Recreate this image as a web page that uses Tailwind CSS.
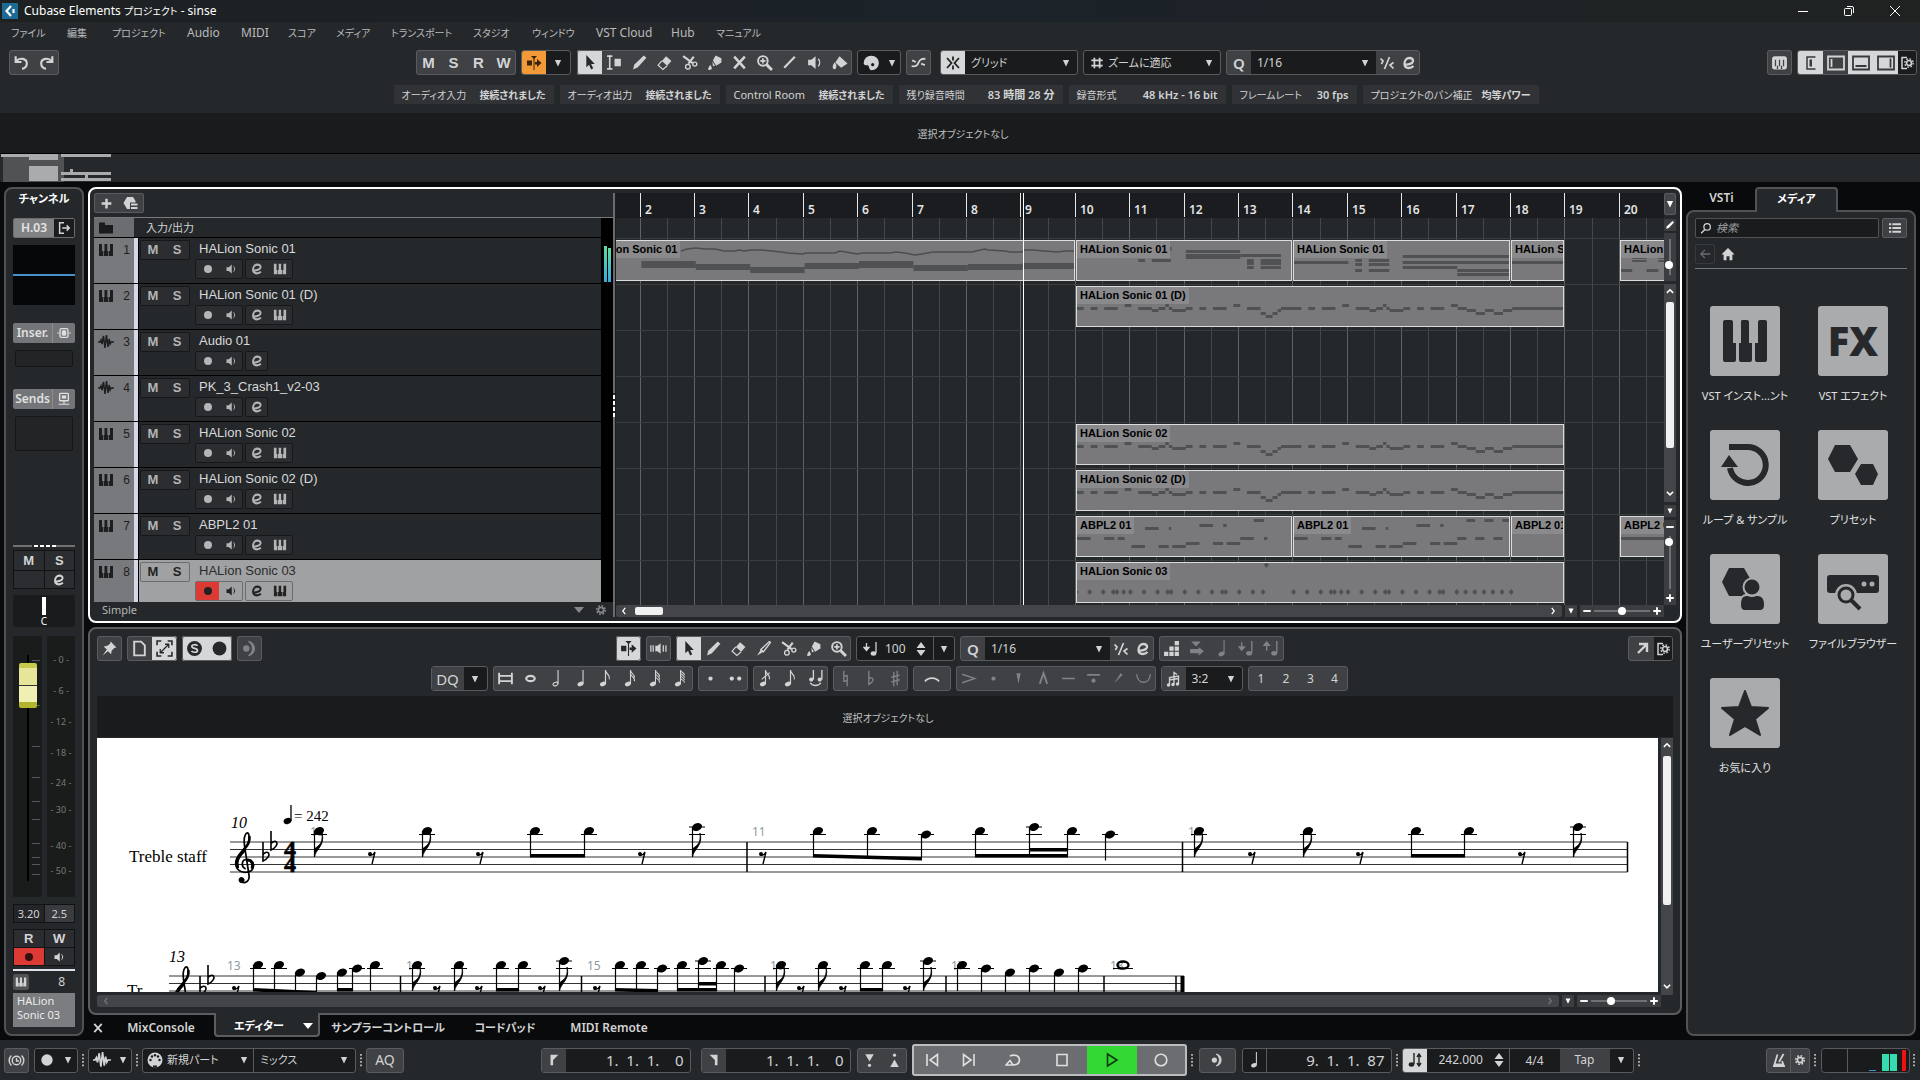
<!DOCTYPE html>
<html lang="ja">
<head>
  <meta charset="UTF-8" />
  <meta name="viewport" content="width=device-width, initial-scale=1.0"/>
  <title>Cubase Elements プロジェクト - sinse</title>
  <script src="https://cdn.jsdelivr.net/npm/@tailwindcss/browser@4"></script>
</head>
<body class="h-screen flex flex-col overflow-hidden bg-[#090a0b] text-[#d2d3d4] text-[12px] leading-4 font-['Noto_Sans','Noto_Sans_CJK_JP',sans-serif] [font-feature-settings:'palt']">

  <!-- icon sprite -->
  <svg class="hidden">
    <symbol id="tri" viewBox="0 0 16 16"><path d="M3 3h10l-5 10.500z" fill="currentColor"/></symbol>
    <symbol id="undo" viewBox="0 0 16 16"><path d="M2.500 2v5.500h5.500M3 7C6 3 13 4 13 9c0 3-2 4.500-4.500 5" fill="none" stroke="currentColor" stroke-width="2"/></symbol>
    <symbol id="redo" viewBox="0 0 16 16"><path d="M13.500 2v5.500H8M13 7C10 3 3 4 3 9c0 3 2 4.500 4.500 5" fill="none" stroke="currentColor" stroke-width="2"/></symbol>
    <symbol id="scroll" viewBox="0 0 16 16"><path d="M1 5.500h5v5H1zM9 7h2V4l4.500 4-4.500 4V9.500H9zM5 1h6L8 4z" fill="currentColor"/><path d="M8 2v13" stroke="currentColor"/></symbol>
    <symbol id="arrow" viewBox="0 0 16 16"><path d="M5 1v11.500l2.600-2.500 1.900 4.500 2-1-2-4.200H13z" fill="currentColor"/></symbol>
    <symbol id="range" viewBox="0 0 16 16"><path d="M1 2h5M1 14h5M3.500 2v12" stroke="currentColor" stroke-width="1.500"/><path d="M8 4.500h6v7H8z" fill="currentColor"/></symbol>
    <symbol id="pencil" viewBox="0 0 16 16"><path d="M12 1.500l2.500 2L6.500 12.500l-4.500 2 1-4.500z" fill="currentColor"/></symbol>
    <symbol id="eraser" viewBox="0 0 16 16"><path d="M9.500 2l5 4.500-4 4.500-5-4.500z" fill="currentColor"/><path d="M5.500 6.500l-3.500 4L6.500 14.500l4-3.500" fill="none" stroke="currentColor" stroke-width="1.200"/></symbol>
    <symbol id="cut" viewBox="0 0 16 16"><path d="M2 2l9 6.500M12 2.500L7 9" stroke="currentColor" stroke-width="2"/><circle cx="6.500" cy="12" r="2.200" fill="none" stroke="currentColor" stroke-width="1.300"/><circle cx="13" cy="9.500" r="1.900" fill="none" stroke="currentColor" stroke-width="1.300"/></symbol>
    <symbol id="glue" viewBox="0 0 16 16"><path d="M9 1.500l5.500 2.500v4l-5 3-3-5zM6 7l2.500 4-2 .5zM2 14.500c0-2 1.500-3 2-4.500.700 1.500 1.500 2 1.500 3.500 0 1.500-3 2-3.500 1z" fill="currentColor"/></symbol>
    <symbol id="xx" viewBox="0 0 16 16"><path d="M3 2.500l10 11M13 2.500l-10 11" stroke="currentColor" stroke-width="2.400"/></symbol>
    <symbol id="zoom" viewBox="0 0 16 16"><circle cx="6.500" cy="6.500" r="4.500" fill="none" stroke="currentColor" stroke-width="1.800"/><path d="M10 10l5 5" stroke="currentColor" stroke-width="2.700"/><path d="M4 6.500h5M6.500 4v5" stroke="currentColor" stroke-width="1.600"/></symbol>
    <symbol id="line" viewBox="0 0 16 16"><path d="M13 2.500L3 13" stroke="currentColor" stroke-width="2"/></symbol>
    <symbol id="spk" viewBox="0 0 16 16"><path d="M2 5.500h3L9 2v12l-4-3.500H2z" fill="currentColor"/><path d="M11.500 4.500c1.800 2 1.800 5 0 7" fill="none" stroke="currentColor" stroke-width="1.300"/></symbol>
    <symbol id="bucket" viewBox="0 0 16 16"><path d="M8 2l7.500 7-6 4-5.500-5zM3.500 8c-2 2-2.500 5-1 6s3-1 2.500-4z" fill="currentColor"/></symbol>
    <symbol id="palette" viewBox="0 0 16 16"><path d="M8 1.500A6.500 6.500 0 001.500 8c0 2 2 2 3.500 2s1 4.500 3.500 4.500a6.500 6.500 0 000-13z" fill="currentColor"/><circle cx="9.500" cy="9.500" r="1.400" fill="#1a1b1d"/></symbol>
    <symbol id="curve" viewBox="0 0 16 16"><path d="M1.500 11.500C11 12.500 5 4 14.500 4.500M2 6l3.500 1.500M10.500 9l3.500 1.500" fill="none" stroke="currentColor" stroke-width="1.700"/></symbol>
    <symbol id="snap" viewBox="0 0 16 16"><path d="M8 1.500v4M8 10.500v4M2 3l4.500 5L2 13M14 3L9.500 8 14 13" fill="none" stroke="currentColor" stroke-width="1.800"/></symbol>
    <symbol id="hash" viewBox="0 0 16 16"><path d="M5 2v12M11 2v12M1.500 5h13M1.500 11h13" stroke="currentColor" stroke-width="2"/></symbol>
    <symbol id="iq" viewBox="0 0 16 16"><path d="M10.500 2L5.500 14M1.500 3.500L4 6l-1.500 3M14.500 7.500L11 10l3.500 3.500" fill="none" stroke="currentColor" stroke-width="1.700"/></symbol>
    <symbol id="ee" viewBox="0 0 16 16"><path d="M3.500 9.500c4 .500 8-1 8.500-3.300C12.300 4 10.500 3 8.500 3 5.500 3 3.500 5.700 3.500 8.700c0 2.600 1.700 4.300 4.300 4.300 2 0 3.500-.8 4.700-2" fill="none" stroke="currentColor" stroke-width="2.300"/></symbol>
    <symbol id="kbox" viewBox="0 0 16 16"><rect x="1" y="2" width="14" height="12.500" rx="2.500" fill="currentColor"/><path d="M4.200 5.500v6M8 5.500v6M11.800 5.500v6M6.100 11v3M9.900 11v3" stroke="#3f4144" stroke-width="1.200"/></symbol>
    <symbol id="pan1" viewBox="0 0 16 16"><path d="M12.500 2H4v12h8.500" fill="none" stroke="currentColor" stroke-width="1.500"/><path d="M6.500 4.500h2.500v7H6.500z" fill="currentColor"/></symbol>
    <symbol id="pan2" viewBox="0 0 18 16"><path d="M1 1.500h16v13H1zM4.500 4v8" fill="none" stroke="currentColor" stroke-width="1.800"/></symbol>
    <symbol id="pan3" viewBox="0 0 18 16"><path d="M1 1.500h16v13H1zM3.500 11h11" fill="none" stroke="currentColor" stroke-width="1.800"/></symbol>
    <symbol id="pan4" viewBox="0 0 18 16"><path d="M1 1.500h16v13H1zM13.500 3.500v9" fill="none" stroke="currentColor" stroke-width="1.800"/></symbol>
    <symbol id="gear" viewBox="0 0 16 16"><circle cx="8" cy="8" r="3.600" fill="none" stroke="currentColor" stroke-width="2.400"/><circle cx="8" cy="8" r="5.800" fill="none" stroke="currentColor" stroke-width="2" stroke-dasharray="2.300 2.250"/></symbol>
    <symbol id="pgear" viewBox="0 0 16 16"><path d="M8 2.500H3v11h5" fill="none" stroke="currentColor" stroke-width="1.500"/><circle cx="10" cy="8" r="2.500" fill="none" stroke="currentColor" stroke-width="1.700"/><circle cx="10" cy="8" r="4.200" fill="none" stroke="currentColor" stroke-width="1.400" stroke-dasharray="1.600 1.700"/></symbol>
    <symbol id="plus" viewBox="0 0 16 16"><path d="M8 2v12M2 8h12" stroke="currentColor" stroke-width="3"/></symbol>
    <symbol id="minus" viewBox="0 0 16 16"><path d="M2 8h12" stroke="currentColor" stroke-width="3"/></symbol>
    <symbol id="preset" viewBox="0 0 16 16"><path d="M5 2h6l2.500 4v1.500H8V14H5L1.500 8z" fill="currentColor"/><path d="M9 9.500h6.500M9 13h6.500" stroke="currentColor" stroke-width="2"/></symbol>
    <symbol id="keys" viewBox="0 0 16 16"><path d="M1 2h3v7h1v5H1zM6.500 2h2.800v7h1v5H5.700V9h.8zM12 2h3v12h-4V9h1z" fill="currentColor"/></symbol>
    <symbol id="wave" viewBox="0 0 16 16"><path d="M0 8h2l1-2 1 4 1.500-8L7 14l1.500-13 1.500 12 1.200-8 1 5 1-2H16" fill="none" stroke="currentColor" stroke-width="1.500"/></symbol>
    <symbol id="folder" viewBox="0 0 16 16"><path d="M1 2.500h6V5h8v8.500H1z" fill="currentColor"/></symbol>
    <symbol id="rec" viewBox="0 0 16 16"><circle cx="8" cy="8" r="4" fill="currentColor"/></symbol>
    <symbol id="bigrec" viewBox="0 0 16 16"><circle cx="8" cy="8" r="6.500" fill="currentColor"/></symbol>
    <symbol id="out" viewBox="0 0 16 16"><path d="M8 2H3v12h5M6 8h8M11 5l3 3-3 3" fill="none" stroke="currentColor" stroke-width="1.700"/></symbol>
    <symbol id="ins" viewBox="0 0 16 16"><rect x="3.500" y="3" width="9" height="10" rx="1.500" fill="none" stroke="currentColor" stroke-width="1.500"/><path d="M6 5.500h4v5H6zM0 8h3M13 8h3" fill="currentColor" stroke="currentColor"/></symbol>
    <symbol id="snd" viewBox="0 0 16 16"><rect x="3" y="1.500" width="10" height="8.500" rx="1" fill="none" stroke="currentColor" stroke-width="1.500"/><path d="M5.500 4h5v3.500h-5z" fill="currentColor"/><path d="M8 10v4M2 14h12" stroke="currentColor" stroke-width="1.300"/></symbol>
    <symbol id="pin" viewBox="0 0 16 16"><path d="M9 1.500l5.500 5.500-2 .5-2.500 2.500-.5 3.500-3-3L1.500 14.500l4-5.500-3-3 3.500-.5L8.500 3.500z" fill="currentColor"/></symbol>
    <symbol id="page" viewBox="0 0 16 16"><path d="M3 1.500h6.500L13 5v9.500H3z" fill="none" stroke="currentColor" stroke-width="1.800"/></symbol>
    <symbol id="expand" viewBox="0 0 16 16"><path d="M1 5V1h4M11 1h4v4M15 11v4h-4M5 15H1v-4" fill="none" stroke="currentColor" stroke-width="1.500"/><path d="M4.500 11.500l7-7M8.500 4H12v3.500M4 8.500V12h3.500" fill="none" stroke="currentColor" stroke-width="1.200"/></symbol>
    <symbol id="solo" viewBox="0 0 16 16"><circle cx="8" cy="8" r="7" fill="currentColor"/><path d="M10.800 5.500C10 4 5.500 4 5.500 6.200c0 2.300 5.300 1.200 5.300 3.600 0 2.200-4.700 2.200-5.600.5" fill="none" stroke="#d6d7d8" stroke-width="1.600"/></symbol>
    <symbol id="moon" viewBox="0 0 16 16"><circle cx="5" cy="8" r="3" fill="currentColor"/><path d="M7 1.200a6.900 6.900 0 010 13.600c5-3.500 5-10 0-13.600z" fill="currentColor" stroke="currentColor"/></symbol>
    <symbol id="spk2" viewBox="0 0 16 16"><path d="M5 5.500h2L10 3v10L7 10.500H5z" fill="currentColor"/><path d="M.8 5v6M3 5v6M12.500 5v6M15 5v6" stroke="currentColor" stroke-width="1.200"/></symbol>
    <symbol id="knife" viewBox="0 0 16 16"><path d="M13.500 1.500l1 1L8 11 5.500 9z" fill="none" stroke="currentColor" stroke-width="1.300"/><path d="M5.500 9L2 14.500 8 11z" fill="currentColor"/></symbol>
    <symbol id="velo" viewBox="0 0 16 16"><path d="M3.500 2v6M1 6.500l2.500 3L6 6.500z" fill="currentColor" stroke="currentColor" stroke-width="1.300"/><path d="M13 1v11" stroke="currentColor" stroke-width="1.300"/><ellipse cx="10.500" cy="12.500" rx="2.800" ry="2.200" fill="currentColor"/></symbol>
    <symbol id="velu" viewBox="0 0 16 16"><path d="M3.500 4v6M1 5l2.500-3L6 5z" fill="currentColor" stroke="currentColor" stroke-width="1.300"/><path d="M13 1v11" stroke="currentColor" stroke-width="1.300"/><ellipse cx="10.500" cy="12.500" rx="2.800" ry="2.200" fill="currentColor"/></symbol>
    <symbol id="spin" viewBox="0 0 16 16"><path d="M8 1l4.500 6h-9zM8 15l4.500-6h-9z" fill="currentColor"/></symbol>
    <symbol id="steps" viewBox="0 0 16 16"><path d="M1 11h4v4H1zM6 11h4v4H6zM11 11h4v4h-4zM6 6h4v4H6zM11 6h4v4h-4zM11 1h4v4h-4z" fill="currentColor"/></symbol>
    <symbol id="stepin" viewBox="0 0 16 16"><path d="M3 1.500h9L7.500 6zM2 8.500h8V6.500l5 4-5 4v-2H2z" fill="currentColor"/></symbol>
    <symbol id="nw" viewBox="0 0 16 16"><path d="M4 12L12.500 3.500M5 3h8v8" fill="none" stroke="currentColor" stroke-width="2.400"/></symbol>
    <symbol id="n0" viewBox="0 0 16 16"><path d="M2 2.500v11M14 2.500v11M2 5.500h12M2 10.500h12" stroke="currentColor" stroke-width="1.800"/></symbol>
    <symbol id="n1" viewBox="0 0 16 16"><ellipse cx="8" cy="8" rx="4" ry="2.500" fill="none" stroke="currentColor" stroke-width="2"/></symbol>
    <symbol id="n2" viewBox="0 0 16 20"><path d="M11 0v16" stroke="currentColor" stroke-width="1.300"/><ellipse cx="8" cy="16.500" rx="3" ry="2" fill="none" stroke="currentColor" stroke-width="1.300" transform="rotate(-20 8 16.500)"/></symbol>
    <symbol id="n4" viewBox="0 0 16 20"><path d="M11 0v16" stroke="currentColor" stroke-width="1.300"/><ellipse cx="8" cy="16.500" rx="3.700" ry="2.600" fill="currentColor" transform="rotate(-20 8 16.500)"/></symbol>
    <symbol id="n8" viewBox="0 0 16 20"><path d="M8 0v16M8 0c0 5 6 5 4.500 11" fill="none" stroke="currentColor" stroke-width="1.400"/><ellipse cx="5" cy="16.500" rx="3.700" ry="2.600" fill="currentColor" transform="rotate(-20 5 16.500)"/></symbol>
    <symbol id="n16" viewBox="0 0 16 20"><path d="M8 0v16M8 0c0 5 6 5 4.500 9M8 4c0 4 6 4 4.500 9" fill="none" stroke="currentColor" stroke-width="1.300"/><ellipse cx="5" cy="16.500" rx="3.700" ry="2.600" fill="currentColor" transform="rotate(-20 5 16.500)"/></symbol>
    <symbol id="n32" viewBox="0 0 16 20"><path d="M8 0v16M8 0c0 4 6 4 4.500 8M8 3.500c0 4 6 4 4.500 8M8 7c0 4 6 4 4.500 8" fill="none" stroke="currentColor" stroke-width="1.200"/><ellipse cx="5" cy="16.500" rx="3.700" ry="2.600" fill="currentColor" transform="rotate(-20 5 16.500)"/></symbol>
    <symbol id="n64" viewBox="0 0 16 20"><path d="M8 0v16M8 0c0 3 5.500 3 4.500 6M8 3c0 3 5.500 3 4.500 6M8 6c0 3 5.500 3 4.500 6M8 9c0 3 5.500 3 4.500 6" fill="none" stroke="currentColor" stroke-width="1.200"/><ellipse cx="5" cy="16.500" rx="3.700" ry="2.600" fill="currentColor" transform="rotate(-20 5 16.500)"/></symbol>
    <symbol id="dot" viewBox="0 0 16 16"><circle cx="8" cy="8" r="2" fill="currentColor"/></symbol>
    <symbol id="dots2" viewBox="0 0 16 16"><circle cx="4.500" cy="8" r="2" fill="currentColor"/><circle cx="11.500" cy="8" r="2" fill="currentColor"/></symbol>
    <symbol id="grace" viewBox="0 0 16 20"><path d="M8 0v16M8 0c0 5 6 5 4.500 11M3.500 11l9.500-8" fill="none" stroke="currentColor" stroke-width="1.300"/><ellipse cx="5" cy="16.500" rx="3.700" ry="2.600" fill="currentColor" transform="rotate(-20 5 16.500)"/></symbol>
    <symbol id="tie" viewBox="0 0 16 16"><path d="M6 0v9M14 0v9M3 12c2 3.500 8 3.500 10 0" fill="none" stroke="currentColor" stroke-width="1.300"/><circle cx="4" cy="9" r="2" fill="currentColor"/><circle cx="12" cy="9" r="2" fill="currentColor"/></symbol>
    <symbol id="nat" viewBox="0 0 16 20"><path d="M6 1v13M10 6v13M6 7.500l4-1M6 13.500l4-1" stroke="currentColor" stroke-width="1.600"/></symbol>
    <symbol id="flat" viewBox="0 0 16 20"><path d="M6 1v16c4-2 6-5 4.500-7C9 8.500 7 9.500 6 11" fill="none" stroke="currentColor" stroke-width="1.600"/></symbol>
    <symbol id="sharp" viewBox="0 0 16 20"><path d="M6 2v17M10 1v17M3 8.500l10-2.500M3 14l10-2.500" stroke="currentColor" stroke-width="1.600"/></symbol>
    <symbol id="slur" viewBox="0 0 16 16"><path d="M1 10.500c3-4.500 11-4.500 14 0" fill="none" stroke="currentColor" stroke-width="1.600"/></symbol>
    <symbol id="acc" viewBox="0 0 16 16"><path d="M2 4l12 4-12 4" fill="none" stroke="currentColor" stroke-width="1.300"/></symbol>
    <symbol id="wedge" viewBox="0 0 16 16"><path d="M6 3h4l-2 10z" fill="currentColor"/></symbol>
    <symbol id="marc" viewBox="0 0 16 16"><path d="M4.500 13L8 3l3.500 10" fill="none" stroke="currentColor" stroke-width="1.800"/></symbol>
    <symbol id="ten" viewBox="0 0 16 16"><path d="M2 8h12" stroke="currentColor" stroke-width="1.600"/></symbol>
    <symbol id="lour" viewBox="0 0 16 16"><path d="M2 4.500h12" stroke="currentColor" stroke-width="1.600"/><circle cx="8" cy="10" r="2" fill="currentColor"/></symbol>
    <symbol id="slash" viewBox="0 0 16 16"><path d="M4 12.500L10 3l2 1.500z" fill="currentColor"/></symbol>
    <symbol id="cup" viewBox="0 0 16 16"><path d="M1.500 4c1 10 12 10 13 0" fill="none" stroke="currentColor" stroke-width="1.300"/></symbol>
    <symbol id="tup" viewBox="0 0 16 16"><path d="M3.500 14V6.500l9-1.500v8M8 13V1.500l3 2M3 9l9.500-1.500" fill="none" stroke="currentColor" stroke-width="1.300"/><circle cx="2.500" cy="14" r="1.700" fill="currentColor"/><circle cx="7" cy="13.500" r="1.700" fill="currentColor"/><circle cx="11.500" cy="13" r="1.700" fill="currentColor"/></symbol>
    <symbol id="search" viewBox="0 0 16 16"><circle cx="9.500" cy="6.500" r="4.300" fill="none" stroke="currentColor" stroke-width="1.700"/><path d="M6.500 10L1.500 15" stroke="currentColor" stroke-width="2"/></symbol>
    <symbol id="list" viewBox="0 0 16 16"><path d="M0 3h3M0 8h3M0 13h3M4.500 3H16M4.500 8H16M4.500 13H16" stroke="currentColor" stroke-width="2.600"/></symbol>
    <symbol id="back" viewBox="0 0 16 16"><path d="M15 8H3M8 2.500L2.500 8 8 13.500" fill="none" stroke="currentColor" stroke-width="1.800"/></symbol>
    <symbol id="home" viewBox="0 0 16 16"><path d="M8 1l7.500 7.500H13V15H9.700v-4.500H6.300V15H3V8.500H.5z" fill="currentColor"/></symbol>
    <symbol id="up" viewBox="0 0 16 16"><path d="M3 11l5-5 5 5" fill="none" stroke="currentColor" stroke-width="2.500"/></symbol>
    <symbol id="down" viewBox="0 0 16 16"><path d="M3 6l5 5 5-5" fill="none" stroke="currentColor" stroke-width="2.500"/></symbol>
    <symbol id="left" viewBox="0 0 16 16"><path d="M10 3L6 8l4 5" fill="none" stroke="currentColor" stroke-width="2"/></symbol>
    <symbol id="right" viewBox="0 0 16 16"><path d="M6 3l4 5-4 5" fill="none" stroke="currentColor" stroke-width="2"/></symbol>
    <symbol id="clock" viewBox="0 0 20 16"><circle cx="10" cy="8" r="5" fill="none" stroke="currentColor" stroke-width="1.700"/><path d="M10 5v3.500h3M4 2C.5 5.500.5 10.500 4 14M16 2c3.500 3.500 3.500 8.500 0 12" fill="none" stroke="currentColor" stroke-width="1.700"/></symbol>
    <symbol id="midi" viewBox="0 0 16 16"><circle cx="8" cy="8" r="7.500" fill="currentColor"/><g fill="#1a1b1d"><circle cx="3.500" cy="8" r="1.200"/><circle cx="5" cy="4.500" r="1.200"/><circle cx="11" cy="4.500" r="1.200"/><circle cx="12.500" cy="8" r="1.200"/><circle cx="8" cy="3.200" r="1.200"/><path d="M6 13.500h4v2H6z"/></g></symbol>
    <symbol id="locl" viewBox="0 0 16 16"><path d="M4 2h9L7 8v6H4z" fill="currentColor"/></symbol>
    <symbol id="locr" viewBox="0 0 16 16"><path d="M12 2H3l6 6v6h3z" fill="currentColor"/></symbol>
    <symbol id="pin1" viewBox="0 0 16 16"><path d="M4 2h8L8 9z" fill="currentColor"/><circle cx="8" cy="12.500" r="1.500" fill="currentColor"/></symbol>
    <symbol id="pin2" viewBox="0 0 16 16"><path d="M4 14h8L8 7z" fill="currentColor"/><circle cx="8" cy="3" r="1.500" fill="currentColor"/></symbol>
    <symbol id="prev" viewBox="0 0 16 16"><path d="M3 2v12M13.500 2.500L6 8l7.500 5.500z" fill="none" stroke="currentColor" stroke-width="1.600"/></symbol>
    <symbol id="next" viewBox="0 0 16 16"><path d="M13 2v12M2.500 2.500L10 8l-7.500 5.500z" fill="none" stroke="currentColor" stroke-width="1.600"/></symbol>
    <symbol id="cycle" viewBox="0 0 16 16"><path d="M5 4c4-2 9.500-.5 9.500 4 0 5-5 5-7 5M1 13h7L5 8.500z" fill="none" stroke="currentColor" stroke-width="1.600"/></symbol>
    <symbol id="stop" viewBox="0 0 16 16"><path d="M3 2.500h10v11H3z" fill="none" stroke="currentColor" stroke-width="1.600"/></symbol>
    <symbol id="play" viewBox="0 0 16 16"><path d="M3.500 2L13 8l-9.500 6z" fill="none" stroke="currentColor" stroke-width="1.600"/></symbol>
    <symbol id="ring" viewBox="0 0 16 16"><circle cx="8" cy="8" r="5.800" fill="none" stroke="currentColor" stroke-width="1.600"/></symbol>
    <symbol id="grip" viewBox="0 0 4 16"><path d="M1 1h2v2H1zM1 5h2v2H1zM1 9h2v2H1zM1 13h2v2H1z" fill="#bfc0c1"/></symbol>
    <symbol id="tempo" viewBox="0 0 16 16"><path d="M7 1v11M12 3v10M10 5l2-3 2 3M10 11l2 3 2-3" fill="none" stroke="currentColor" stroke-width="1.400"/><ellipse cx="4.500" cy="12.500" rx="2.800" ry="2.200" fill="currentColor"/></symbol>
    <symbol id="metro" viewBox="0 0 16 16"><path d="M6.500 2.500L3 14h10l-2-5M8 10l4.500-8" fill="none" stroke="currentColor" stroke-width="1.800"/><path d="M3 11.500h9.500V15H2.500z" fill="currentColor"/></symbol>
  </svg>

  <!-- title bar -->
  <header class="h-[22px] shrink-0 flex items-center bg-gradient-to-r from-[#1e2122] via-[#1b2229] to-[#1f2221] text-white">
    <svg class="ml-0.5 w-4 h-4" viewBox="0 0 16 16"><rect width="16" height="16" fill="#1c6a96"/><path d="M9 3L4.500 8 9 13M11.500 6v4" fill="none" stroke="#fff" stroke-width="2.200"/></svg>
    <h1 class="ml-1.5 text-[12px]">Cubase Elements <span class="text-[10px]">プロジェクト</span> - sinse</h1>
    <div class="ml-auto flex pr-0.5">
      <button aria-label="最小化" class="w-[46px] flex justify-center"><svg class="size-3" viewBox="0 0 12 12"><path d="M1 6.500h10" stroke="#fff"/></svg></button>
      <button aria-label="元に戻す" class="w-[46px] flex justify-center"><svg class="size-3" viewBox="0 0 12 12" fill="none" stroke="#fff"><rect x="1.500" y="3.500" width="7" height="7" rx="1"/><path d="M4 1.500h5q1.500 0 1.500 1.500v5"/></svg></button>
      <button aria-label="閉じる" class="w-[46px] flex justify-center"><svg class="size-3" viewBox="0 0 12 12"><path d="M1 1l10 10M11 1L1 11" stroke="#fff"/></svg></button>
    </div>
  </header>

  <!-- menu -->
  <nav id="menu" class="h-[22px] shrink-0 flex items-center bg-[#25282b] pl-[11px] text-[#b9babb]"></nav>

  <!-- main toolbar -->
  <div class="h-9 shrink-0 flex items-start gap-[5px] bg-[#25282b] pt-1.5 pl-[9px] pr-[3px]">
    <div class="mr-2.5" data-tools="undo redo"></div>
    <div class="ml-auto" data-tools="'M 'S 'R 'W"></div>
    <div class="flex h-[25px] rounded-[3px] overflow-hidden border border-[#595b5e] bg-[#191b1c]">
      <button aria-label="自動スクロール" class="w-6 grid place-items-center bg-[#f29a38] text-[#3a2408]"><svg class="size-4"><use href="#scroll"/></svg></button>
      <button aria-label="自動スクロール設定" class="w-6 grid place-items-center"><svg class="size-2.5"><use href="#tri"/></svg></button>
    </div>
    <div class="ml-px" data-tools="arrow* range pencil eraser cut glue xx zoom line spk bucket"></div>
    <div class="flex items-center justify-around w-11 h-[25px] rounded-[3px] border border-[#595b5e] bg-[#191b1c]"><svg class="size-[18px]"><use href="#palette"/></svg><svg class="size-2.5"><use href="#tri"/></svg></div>
    <div data-tools="curve"></div>
    <div class="ml-1 flex items-center w-[138px] h-[25px] rounded-[3px] overflow-hidden border border-[#595b5e] bg-[#191b1c]">
      <button aria-label="スナップ" class="w-6 h-full grid place-items-center bg-[#d6d7d8] text-[#222]"><svg class="size-4"><use href="#snap"/></svg></button>
      <select aria-label="スナップの種類" class="flex-1 min-w-0 appearance-none bg-transparent pl-1.5 text-[11px]"><option>グリッド</option></select>
      <svg class="size-2.5 mr-1.5 pointer-events-none"><use href="#tri"/></svg>
    </div>
    <div class="flex items-center w-[138px] h-[25px] rounded-[3px] border border-[#595b5e] bg-[#191b1c]">
      <svg class="size-3.5 ml-1.5"><use href="#hash"/></svg>
      <select aria-label="グリッドの種類" class="flex-1 min-w-0 appearance-none bg-transparent pl-1 text-[11px]"><option>ズームに適応</option></select>
      <svg class="size-2.5 mr-1.5 pointer-events-none"><use href="#tri"/></svg>
    </div>
    <div class="flex items-center w-[194px] h-[25px] rounded-[3px] overflow-hidden border border-[#595b5e] bg-[#3f4144]">
      <span class="w-6 text-center text-[15px] font-semibold">Q</span>
      <select aria-label="クオンタイズ" class="w-[125px] h-full appearance-none bg-[#191b1c] pl-1.5"><option>1/16</option></select>
      <svg class="size-2.5 -ml-4 mr-1.5 pointer-events-none"><use href="#tri"/></svg>
      <button aria-label="反復クオンタイズ" class="w-[22px] grid place-items-center"><svg class="size-4"><use href="#iq"/></svg></button>
      <button aria-label="クオンタイズパネル" class="w-[21px] grid place-items-center"><svg class="size-4"><use href="#ee"/></svg></button>
    </div>
    <div class="ml-auto" data-tools="kbox"></div>
    <div class="flex h-[25px] rounded-[3px] overflow-hidden border border-[#595b5e] bg-[#3f4144]">
      <button aria-label="左ゾーン" class="w-[25px] grid place-items-center bg-[#d6d7d8] text-[#37393b]"><svg class="size-4"><use href="#pan1"/></svg></button>
      <button aria-label="インスペクター" class="w-[25px] grid place-items-center"><svg class="w-[18px] h-4"><use href="#pan2"/></svg></button>
      <button aria-label="下ゾーン" class="w-[25px] grid place-items-center bg-[#d6d7d8] text-[#37393b]"><svg class="w-[18px] h-4"><use href="#pan3"/></svg></button>
      <button aria-label="右ゾーン" class="w-[25px] grid place-items-center bg-[#d6d7d8] text-[#37393b]"><svg class="w-[18px] h-4"><use href="#pan4"/></svg></button>
      <button aria-label="レイアウト設定" class="w-[18px] grid place-items-center bg-[#191b1c]"><svg class="size-4"><use href="#pgear"/></svg></button>
    </div>
  </div>

  <!-- status line -->
  <dl id="status" class="h-[33px] shrink-0 flex justify-center gap-1.5 bg-[#25282b] pt-[5px] pl-3 text-[11px]"></dl>

  <div class="h-10 shrink-0 grid place-items-center bg-[#191b1c] pl-1.5 pt-0.5 text-[10px] text-[#c0c1c2]">選択オブジェクトなし</div>

  <!-- project overview -->
  <div class="h-[29px] shrink-0 border-t border-black bg-[#25292b]">
    <svg class="block w-28 h-7" fill="#a9abac"><path d="M3 0h61v28H3z" fill="#505254"/><path d="M1 0h29v3H1zM29 0h29v6H29zM29 12h29v15H29zM61 0h50v3H61zM61 18h50v3H61zM61 24h50v3H61zM70 15h3v3h-3zM85 21h3v3h-3z"/></svg>
  </div>

  <main class="flex-1 min-h-0 flex gap-1 px-1 pt-[5px]">

    <!-- channel strip -->
    <aside class="w-20 shrink-0 mb-1 flex flex-col rounded-lg border-2 border-[#505356] bg-[#25282b] px-[7px]">
      <h2 class="h-5 text-center leading-5 text-[11px] font-semibold text-white">チャンネル</h2>
      <div class="mt-[9px] flex h-5 shrink-0 rounded-xs border border-[#6b6d70] overflow-hidden"><button class="w-10 bg-[#808284] text-[12px] font-semibold text-[#e4e4e4]">H.03</button><button aria-label="出力" class="flex-1 grid place-items-center bg-[#1b1c1e]"><svg class="size-3.5"><use href="#out"/></svg></button></div>
      <div class="mt-[7px] h-[60px] shrink-0 bg-[#060708] flex items-center"><div class="h-0.5 w-full bg-[#4a90c8]"></div></div>
      <div class="mt-[18px] flex h-5 shrink-0 rounded-xs bg-[#737578] text-[#e0e0e0]"><button class="w-10 border-r border-[#8b8d8f] text-[12px] font-semibold">Inser.</button><button aria-label="インサート" class="flex-1 grid place-items-center"><svg class="size-3.5"><use href="#ins"/></svg></button></div>
      <div class="mt-[7px] mx-0.5 h-[17px] shrink-0 rounded-xs border border-[#151617] bg-[#222426]"></div>
      <div class="mt-[22px] flex h-5 shrink-0 rounded-xs bg-[#737578] text-[#e0e0e0]"><button class="w-10 border-r border-[#8b8d8f] text-[12px] font-semibold">Sends</button><button aria-label="センド" class="flex-1 grid place-items-center"><svg class="size-3.5"><use href="#snd"/></svg></button></div>
      <div class="mt-[7px] mx-0.5 h-[35px] shrink-0 rounded-xs border border-[#151617] bg-[#222426]"></div>
      <div class="mt-auto flex items-center h-1 shrink-0"><i class="h-0.5 flex-1 bg-[#707274]"></i><i class="h-0.5 w-6 bg-[repeating-linear-gradient(90deg,#25282b_0_2px,#fff_2px_6px)]"></i><i class="h-0.5 flex-1 bg-[#707274]"></i></div>
      <div class="mt-0.5 grid grid-cols-2 gap-px h-[39px] shrink-0 border border-[#111213] bg-[#111213] *:bg-[#2b2d30] font-['Liberation_Sans',sans-serif] font-bold text-[13px]">
        <button>M</button><button>S</button><button aria-label="空き"></button><button aria-label="編集" class="grid place-items-center"><svg class="size-3.5"><use href="#ee"/></svg></button>
      </div>
      <div class="mt-1.5 h-8 shrink-0 flex flex-col items-center rounded-xs bg-[#1a1b1c] text-[10px] leading-3 text-white"><i class="mt-0.5 w-1 h-[18px] shrink-0 bg-white"></i>C</div>
      <div class="mt-[9px] h-[261px] shrink-0 flex gap-[5px]">
        <div class="relative w-[29px] rounded-xs bg-[#1a1c1c]">
          <svg class="absolute inset-0 w-full h-full" stroke="#55585a"><path d="M19 24.500h8M19 69.500h8M19 110.500h8M19 141.500h8M19 165.500h8M19 183.500h8M19 207.500h8M19 221.500h8M19 228.500h8M19 238.500h8"/><path d="M15 19v226" stroke="#000" stroke-width="2"/></svg>
          <input type="range" aria-label="音量" min="0" max="100" value="4" class="absolute left-1.5 top-5 m-0 w-[18px] h-56 appearance-none bg-transparent [writing-mode:vertical-lr] [&::-webkit-slider-thumb]:appearance-none [&::-webkit-slider-thumb]:w-[18px] [&::-webkit-slider-thumb]:h-[45px] [&::-webkit-slider-thumb]:rounded-xs [&::-webkit-slider-thumb]:bg-[linear-gradient(#c9c94e_0_5px,#e6e69a_5px_22px,#333_22px_23px,#f0f0b4_23px_39px,#b3b52c_39px)]"/>
        </div>
        <div id="dbs" class="relative flex-1 rounded-xs bg-[#1a1c1c] text-[9px] leading-3 text-[#77797b] text-center"></div>
      </div>
      <div class="mt-[7px] grid grid-cols-2 gap-px h-[19px] shrink-0 border border-[#111213] bg-[#111213] text-center leading-[17px] text-[11px]"><span class="bg-[#232528]">3.20</span><span class="bg-[#393b3e]">2.5</span></div>
      <div class="mt-1.5 grid grid-cols-2 gap-px h-[37px] shrink-0 border border-[#111213] bg-[#111213] font-['Liberation_Sans',sans-serif] font-bold text-[13px]">
        <button class="bg-[#2b2d30]">R</button><button class="bg-[#2b2d30]">W</button>
        <button aria-label="録音可能" class="grid place-items-center bg-[#dd3a36] text-[#34100f]"><svg class="size-4"><use href="#rec"/></svg></button><button aria-label="モニター" class="grid place-items-center bg-[#2b2d30]"><svg class="size-3"><use href="#spk"/></svg></button>
      </div>
      <div class="mt-[3px] h-0.5 shrink-0 bg-[#dfe1ec]"></div>
      <div class="mt-[3px] h-4 shrink-0 flex items-center justify-between pr-2.5"><span class="size-4 grid place-items-center rounded-xs bg-[#505255]"><svg class="size-3"><use href="#keys"/></svg></span>8</div>
      <div class="mt-[3px] mb-[7px] h-[34px] shrink-0 bg-[#7b7d80] px-1 py-px text-[11px] leading-[14px] text-[#ececec]">HALion<br>Sonic 03</div>
    </aside>

    <div class="flex-1 min-w-0 flex flex-col">

      <!-- project window -->
      <section class="h-[436px] shrink-0 flex rounded-lg border-2 border-white bg-[#25282b] p-1">
        <div class="w-[519px] shrink-0 flex flex-col">
          <div class="h-6 shrink-0"><div class="flex w-[50px] h-5 items-center justify-around rounded-xs border border-[#595b5e] bg-[#3f4144]"><button aria-label="トラックを追加"><svg class="size-[13px]"><use href="#plus"/></svg></button><button aria-label="プリセット"><svg class="size-4"><use href="#preset"/></svg></button></div></div>
          <div class="flex-1 min-h-0 flex border-t border-[#77797b]">
            <div id="tracks" class="flex-1 min-w-0 overflow-hidden">
              <div class="flex h-[19px] items-center"><span class="w-10 h-full flex items-center pl-1 bg-[#6b6d70] text-[#1a1b1c]"><svg class="size-4"><use href="#folder"/></svg></span><span class="pl-3 text-[11px]">入力/出力</span></div>
            </div>
            <div class="w-3 flex justify-center gap-px bg-black pt-7"><i class="w-[3px] h-9 bg-gradient-to-b from-[#5fdd9a] to-[#3aa9dc]"></i><i class="mt-0.5 w-[3px] h-[34px] bg-gradient-to-b from-[#5fdd9a] to-[#3aa9dc]"></i></div>
          </div>
          <div class="h-[15px] shrink-0 flex items-center gap-2.5 pl-2 pr-1.5 text-[#b4b5b6]"><span class="mr-auto text-[11px]">Simple</span><svg class="w-3 h-2 text-[#85878a]" viewBox="0 0 12 8"><path d="M1 1h10L6 7z" fill="currentColor"/></svg><svg class="size-3 text-[#85878a]"><use href="#gear"/></svg></div>
        </div>
        <div class="w-[3px] shrink-0 flex items-center justify-center bg-[#6a6c6f] border-r border-[#1b1c1e]"><i class="w-0.5 h-6 bg-[repeating-linear-gradient(#25282b_0_2px,#fff_2px_6px)]"></i></div>
        <div class="flex-1 min-w-0 flex flex-col">
          <div id="timeline" class="relative flex-1 overflow-hidden"></div>
          <div class="h-3 flex gap-[3px]">
            <div class="flex-1 flex items-center gap-1.5 bg-[#434548] rounded-xs pl-[3px] text-white"><svg class="size-2.5"><use href="#left"/></svg><i class="w-7 h-2 rounded-xs bg-[#f0f0f1]"></i><svg class="ml-auto mr-1 size-2.5"><use href="#right"/></svg></div>
            <button aria-label="ズーム設定" class="w-3 grid place-items-center bg-[#3b3d40] text-white"><svg class="size-2"><use href="#tri"/></svg></button>
            <div class="w-[84px] flex items-center justify-between px-0.5 bg-[#3b3d40] text-white"><svg class="size-2.5"><use href="#minus"/></svg><input type="range" aria-label="横ズーム" class="w-14 h-0.5 appearance-none bg-[#6f7174] [&::-webkit-slider-thumb]:appearance-none [&::-webkit-slider-thumb]:size-2 [&::-webkit-slider-thumb]:rounded-full [&::-webkit-slider-thumb]:bg-white"/><svg class="size-2.5"><use href="#plus"/></svg></div>
          </div>
        </div>
        <div class="w-3 shrink-0 flex flex-col items-center text-white *:w-full *:shrink-0">
          <button aria-label="ルーラー設定" class="h-[22px] grid place-items-center rounded-xs border border-[#595b5e] bg-[#434548]"><svg class="size-2.5"><use href="#tri"/></svg></button>
          <button aria-label="編集" class="mt-1 h-3 grid place-items-center bg-[#3b3d40]"><svg class="size-2.5"><use href="#pencil"/></svg></button>
          <div class="mt-0.5 h-12 flex justify-center py-1.5 bg-[#3b3d40]"><input type="range" aria-label="波形ズーム" value="80" class="m-0 w-0.5 h-9 appearance-none bg-[#6f7174] [writing-mode:vertical-lr] [&::-webkit-slider-thumb]:appearance-none [&::-webkit-slider-thumb]:size-2 [&::-webkit-slider-thumb]:-ml-[3px] [&::-webkit-slider-thumb]:rounded-full [&::-webkit-slider-thumb]:bg-white"/></div>
          <div class="mt-[3px] h-[218px] flex flex-col items-center bg-[#434548]"><svg class="mt-0.5 size-2.5"><use href="#up"/></svg><i class="mt-1.5 w-2 h-[146px] rounded-xs bg-[#f0f0f1]"></i><svg class="mt-auto mb-1 size-2.5"><use href="#down"/></svg></div>
          <button aria-label="縦ズーム設定" class="mt-[3px] h-3 grid place-items-center bg-[#3b3d40]"><svg class="size-2"><use href="#tri"/></svg></button>
          <div class="mt-[3px] flex-1 flex flex-col items-center bg-[#3b3d40] py-0.5"><svg class="size-2.5"><use href="#minus"/></svg><input type="range" aria-label="縦ズーム" value="4" class="m-0 mt-1 w-0.5 flex-1 min-h-0 appearance-none bg-[#6f7174] [writing-mode:vertical-lr] [&::-webkit-slider-thumb]:appearance-none [&::-webkit-slider-thumb]:size-2 [&::-webkit-slider-thumb]:-ml-[3px] [&::-webkit-slider-thumb]:rounded-full [&::-webkit-slider-thumb]:bg-white"/><svg class="mt-1 size-2.5"><use href="#plus"/></svg></div>
          <i class="h-3"></i>
        </div>
      </section>

      <!-- lower zone: score editor -->
      <section class="mt-1 flex-1 min-h-0 flex flex-col rounded-lg border-2 border-[#5b5d60] bg-[#25282b] px-[7px] pt-[7px] pb-1.5">
        <div class="h-[30px] shrink-0 grid grid-cols-[1fr_auto_1fr] items-start">
          <div class="flex gap-[5px]"><div data-tools="pin"></div><div data-tools="page expand*"></div><div data-tools="solo* bigrec*"></div><div data-tools="moon-"></div></div>
          <div class="flex gap-[5px] pl-[130px]">
            <div data-tools="scroll*"></div><div data-tools="spk2"></div><div data-tools="arrow* pencil eraser knife cut glue zoom"></div>
            <div class="flex items-center w-[99px] h-[25px] rounded-[3px] border border-[#595b5e] bg-[#191b1c]"><svg class="ml-1.5 size-4 shrink-0"><use href="#velo"/></svg><input aria-label="ベロシティ" value="100" class="ml-1.5 w-6 bg-transparent"/><svg class="ml-1 size-4 shrink-0"><use href="#spin"/></svg><span class="ml-1 flex-1 h-full grid place-items-center border-l border-[#595b5e]"><svg class="size-2.5"><use href="#tri"/></svg></span></div>
            <div class="flex items-center w-[194px] h-[25px] rounded-[3px] overflow-hidden border border-[#595b5e] bg-[#3f4144]">
              <span class="w-6 text-center text-[15px] font-semibold">Q</span>
              <select aria-label="クオンタイズ" class="w-[125px] h-full appearance-none bg-[#191b1c] pl-1.5"><option>1/16</option></select>
              <svg class="size-2.5 -ml-4 mr-1.5 pointer-events-none"><use href="#tri"/></svg>
              <button aria-label="反復クオンタイズ" class="w-[22px] grid place-items-center"><svg class="size-4"><use href="#iq"/></svg></button>
              <button aria-label="クオンタイズパネル" class="w-[21px] grid place-items-center"><svg class="size-4"><use href="#ee"/></svg></button>
            </div>
            <div data-tools="steps stepin- n4- velo- velu-"></div>
          </div>
          <div class="justify-self-end flex h-[25px] rounded-[3px] overflow-hidden border border-[#595b5e] bg-[#3f4144]"><button aria-label="別ウィンドウで開く" class="w-[25px] grid place-items-center"><svg class="size-4"><use href="#nw"/></svg></button><button aria-label="設定" class="w-[18px] grid place-items-center bg-[#191b1c]"><svg class="size-4"><use href="#pgear"/></svg></button></div>
        </div>
        <div class="h-[30px] shrink-0 flex justify-center gap-[5px] pl-2 text-[13px]">
          <div class="flex w-[57px] h-[25px] rounded-[3px] overflow-hidden border border-[#595b5e] bg-[#191b1c]"><button class="w-8 bg-[#3f4144] text-[15px]">DQ</button><button aria-label="DQ 設定" class="flex-1 grid place-items-center"><svg class="size-2.5"><use href="#tri"/></svg></button></div>
          <div data-tools="n0 n1 n2 n4 n8 n16 n32 n64"></div><div data-tools="dot dots2"></div><div data-tools="grace n8 tie"></div><div data-tools="nat- flat- sharp-"></div>
          <div class="flex w-[38px] h-[25px] rounded-[3px] border border-[#595b5e] bg-[#3f4144]"><button aria-label="スラー" class="flex-1 grid place-items-center"><svg class="size-4"><use href="#slur"/></svg></button></div>
          <div data-tools="acc- dot- wedge- marc- ten- lour- slash- cup-"></div>
          <div class="flex items-center w-[82px] h-[25px] rounded-[3px] overflow-hidden border border-[#595b5e] bg-[#191b1c]"><button aria-label="連符" class="w-6 h-full grid place-items-center bg-[#3f4144]"><svg class="size-4"><use href="#tup"/></svg></button><select aria-label="連符の種類" class="flex-1 min-w-0 appearance-none bg-transparent pl-1.5 text-[12px]"><option>3:2</option></select><svg class="size-2.5 mr-1.5 pointer-events-none"><use href="#tri"/></svg></div>
          <div class="flex h-[25px] rounded-[3px] border border-[#595b5e] bg-[#3f4144] text-[12px]"><button class="w-[25px]">1</button><button class="w-[25px]">2</button><button class="w-6">3</button><button class="w-6">4</button></div>
        </div>
        <div class="h-[41px] shrink-0 grid place-items-center bg-[#191b1c] pl-1.5 pt-0.5 text-[10px] text-[#c0c1c2]">選択オブジェクトなし</div>
        <div class="flex-1 min-h-0 mt-px flex">
          <div class="flex-1 min-w-0 flex flex-col gap-[3px]">
            <div class="flex-1 min-h-0 mr-[3px] bg-white overflow-hidden"><svg id="score" class="w-full h-full text-black"></svg></div>
            <div class="h-3 flex gap-[3px]">
              <div class="flex-1 flex items-center justify-between bg-[#434548] rounded-xs px-1 text-[#77797b]"><svg class="size-2.5"><use href="#left"/></svg><svg class="size-2.5"><use href="#right"/></svg></div>
              <button aria-label="ズーム設定" class="w-3 grid place-items-center bg-[#3b3d40] text-white"><svg class="size-2"><use href="#tri"/></svg></button>
              <div class="w-[84px] flex items-center justify-between px-0.5 bg-[#3b3d40] text-white"><svg class="size-2.5"><use href="#minus"/></svg><input type="range" aria-label="ズーム" value="34" class="w-14 h-0.5 appearance-none bg-[#6f7174] [&::-webkit-slider-thumb]:appearance-none [&::-webkit-slider-thumb]:size-2 [&::-webkit-slider-thumb]:rounded-full [&::-webkit-slider-thumb]:bg-white"/><svg class="size-2.5"><use href="#plus"/></svg></div>
            </div>
          </div>
          <div class="w-3 mb-3 flex flex-col items-center bg-[#434548] text-white"><svg class="mt-0.5 size-2.5"><use href="#up"/></svg><i class="mt-1.5 w-2 h-[149px] rounded-xs bg-[#f0f0f1]"></i><svg class="mt-auto mb-1 size-2.5"><use href="#down"/></svg></div>
        </div>
      </section>
      <nav class="h-[25px] shrink-0 flex items-center font-semibold text-[12px]">
        <button aria-label="閉じる" class="ml-1 w-3"><svg class="size-3"><use href="#xx"/></svg></button>
        <button class="ml-1 w-[106px]">MixConsole</button>
        <button class="relative self-start w-[106px] h-6 -mt-0.5 flex items-center rounded-b-sm border-2 border-t-0 border-[#5b5d60] bg-[#25282b] pl-[18px] pr-1 pt-1 text-[11px] text-white"><span class="mr-auto">エディター</span><svg class="w-3 h-2" viewBox="0 0 12 8"><path d="M1 1h10L6 7z" fill="currentColor"/></svg></button>
        <button class="w-[136px] text-[11px]">サンプラーコントロール</button>
        <button class="w-[98px] text-[11px]">コードパッド</button>
        <button class="w-[110px]">MIDI Remote</button>
      </nav>
    </div>

    <!-- media rack -->
    <aside class="w-[230px] shrink-0 mb-1 flex flex-col">
      <nav class="h-[25px] shrink-0 flex font-semibold text-[12px] leading-5">
        <button class="w-[69px] pb-1 pl-0.5">VSTi</button>
        <button class="relative w-[83px] h-[25px] rounded-t-sm border-2 border-b-0 border-[#505356] bg-[#25282b] pb-1 text-[11px] text-white">メディア</button>
      </nav>
      <div class="-mt-0.5 flex-1 rounded-lg border-2 border-[#505356] bg-[#25282b] px-[7px] pt-1.5">
        <div class="flex gap-[3px] h-5"><label class="flex-1 flex items-center rounded-xs border border-[#505356] bg-[#191b1c] pl-1"><svg class="size-3 shrink-0"><use href="#search"/></svg><input type="search" aria-label="検索" placeholder="検索" class="ml-1 w-full bg-transparent text-[11px] italic placeholder:text-[#9a9c9e]"/></label><button aria-label="リスト表示" class="w-[25px] grid place-items-center rounded-xs border border-[#595b5e] bg-[#3f4144]"><svg class="w-4 h-3"><use href="#list"/></svg></button></div>
        <div class="mt-1.5 flex items-center gap-1.5 h-[25px] border-b border-[#77797b] pb-1"><button aria-label="戻る" class="size-5 grid place-items-center rounded-xs border border-[#37393c] text-[#6a6c6f]"><svg class="size-3"><use href="#back"/></svg></button><button aria-label="ホーム"><svg class="size-3.5"><use href="#home"/></svg></button></div>
        <div id="tiles" class="mt-[37px] -ml-1 grid grid-cols-2"></div>
      </div>
    </aside>
  </main>

  <!-- transport -->
  <footer class="h-10 shrink-0 flex items-center bg-[#25282b] px-1">
    <div data-tools="clock"></div>
    <div class="ml-[5px] flex items-center justify-around w-11 h-[25px] rounded-[3px] border border-[#595b5e] bg-[#191b1c]"><svg class="size-3.5"><use href="#bigrec"/></svg><svg class="size-2.5"><use href="#tri"/></svg></div>
    <svg class="mx-[3px] w-1 h-3.5"><use href="#grip"/></svg>
    <div class="flex items-center justify-around w-11 h-[25px] rounded-[3px] border border-[#595b5e] bg-[#191b1c]"><svg class="size-[18px]"><use href="#wave"/></svg><svg class="size-2.5"><use href="#tri"/></svg></div>
    <svg class="mx-[3px] w-1 h-3.5"><use href="#grip"/></svg>
    <div class="flex items-center w-[214px] h-[25px] rounded-[3px] border border-[#595b5e] bg-[#191b1c]">
      <svg class="ml-1 size-4 shrink-0"><use href="#midi"/></svg><select aria-label="MIDI 録音モード" class="ml-1 w-[72px] appearance-none bg-transparent text-[11px]"><option>新規パート</option></select><svg class="size-2.5 shrink-0 pointer-events-none"><use href="#tri"/></svg>
      <select aria-label="サイクル録音モード" class="ml-1 flex-1 min-w-0 h-full appearance-none border-l border-[#595b5e] bg-transparent pl-1.5 text-[11px]"><option>ミックス</option></select><svg class="mr-1.5 size-2.5 shrink-0 pointer-events-none"><use href="#tri"/></svg>
    </div>
    <svg class="mx-[3px] w-1 h-3.5"><use href="#grip"/></svg>
    <button class="mr-3.5 w-[38px] h-[25px] rounded-[3px] border border-[#595b5e] bg-[#3f4144] text-[14px]">AQ</button>

    <div class="ml-auto flex w-[150px] h-[25px] rounded-[3px] overflow-hidden border border-[#595b5e] bg-[#191b1c] text-[15px]"><button aria-label="左ロケーター" class="w-6 grid place-items-center bg-[#3f4144]"><svg class="size-3.5"><use href="#locl"/></svg></button><input aria-label="左ロケーター位置" value="1.  1.  1.    0" class="flex-1 min-w-0 bg-transparent text-right pr-1.5"/></div>
    <div class="ml-2.5 flex w-[150px] h-[25px] rounded-[3px] overflow-hidden border border-[#595b5e] bg-[#191b1c] text-[15px]"><button aria-label="右ロケーター" class="w-6 grid place-items-center bg-[#3f4144]"><svg class="size-3.5"><use href="#locr"/></svg></button><input aria-label="右ロケーター位置" value="1.  1.  1.    0" class="flex-1 min-w-0 bg-transparent text-right pr-1.5"/></div>
    <div class="ml-1.5" data-tools="pin1 pin2"></div>
    <div class="ml-[5px] grid grid-cols-[36px_38px_50px_49px_50px_1fr] w-[275px] h-8 rounded-[3px] border-2 border-[#bcbdbe] bg-[#6b6d70] text-[#e0e0e0] *:grid *:place-items-center">
      <button aria-label="前へ"><svg class="size-4"><use href="#prev"/></svg></button><button aria-label="次へ"><svg class="size-4"><use href="#next"/></svg></button><button aria-label="サイクル"><svg class="size-4"><use href="#cycle"/></svg></button><button aria-label="停止"><svg class="size-4"><use href="#stop"/></svg></button><button aria-label="再生" class="bg-[#34d834] text-[#0b3a0b]"><svg class="size-4"><use href="#play"/></svg></button><button aria-label="録音"><svg class="size-4"><use href="#ring"/></svg></button>
    </div>
    <svg class="mx-[3px] w-1 h-3.5"><use href="#grip"/></svg>
    <div class="ml-0.5 flex w-[37px] h-[25px] rounded-[3px] border border-[#595b5e] bg-[#3f4144]"><button aria-label="プリロール" class="flex-1 grid place-items-center"><svg class="size-3.5"><use href="#moon"/></svg></button></div>
    <div class="ml-1.5 flex w-[150px] h-[25px] rounded-[3px] border border-[#595b5e] bg-[#191b1c] text-[15px]"><button aria-label="表示形式" class="w-6 grid place-items-center border-r border-[#595b5e]"><svg class="size-4"><use href="#n4"/></svg></button><input aria-label="現在位置" value="9.  1.  1.  87" class="flex-1 min-w-0 bg-transparent text-right pr-1.5"/></div>
    <svg class="mx-[3px] w-1 h-3.5"><use href="#grip"/></svg>
    <div class="flex w-[232px] h-[25px] rounded-[3px] overflow-hidden border border-[#595b5e] bg-[#191b1c] text-[12px]">
      <button aria-label="テンポトラック" class="w-6 grid place-items-center bg-[#d6d7d8] text-[#222]"><svg class="size-4"><use href="#tempo"/></svg></button>
      <input aria-label="テンポ" value="242.000" class="ml-3 w-[50px] bg-transparent"/><svg class="ml-0.5 self-center size-4 shrink-0"><use href="#spin"/></svg>
      <span class="ml-0.5 w-[51px] text-center leading-[23px] border-l border-[#595b5e]">4/4</span>
      <button class="w-[50px] bg-[#3f4144]">Tap</button><button aria-label="テンポ設定" class="flex-1 grid place-items-center"><svg class="size-2.5"><use href="#tri"/></svg></button>
    </div>
    <svg class="mx-[3px] w-1 h-3.5"><use href="#grip"/></svg>

    <div class="ml-auto flex w-11 h-[25px] rounded-[3px] border border-[#595b5e] bg-[#3f4144]"><button aria-label="メトロノーム" class="w-6 grid place-items-center border-r border-[#595b5e]"><svg class="size-4"><use href="#metro"/></svg></button><button aria-label="メトロノーム設定" class="flex-1 grid place-items-center"><svg class="size-3"><use href="#gear"/></svg></button></div>
    <svg class="ml-[3px] mr-1 w-1 h-3.5"><use href="#grip"/></svg>
    <svg class="w-[90px] h-[25px]"><rect x=".5" y=".5" width="88" height="24" rx="3" fill="#191b1c" stroke="#595b5e"/><path d="M26.500 1v23" stroke="#595b5e"/><path d="M48 22h7v1h-7z" fill="#3a8fe0"/><path d="M61 6h7v17h-7zM69 6h7v17h-7z" fill="#35dcb0"/><path d="M81 2h4v21h-4z" fill="#ee1111"/></svg>
    <svg class="ml-px w-1 h-3.5"><use href="#grip"/></svg>
  </footer>

  <script>
    const $ = id => document.getElementById(id);

    // toolbar groups: "*" = active, "-" = disabled, "'" = plain letter
    document.querySelectorAll('[data-tools]').forEach(el => {
      el.classList.add('flex', 'h-[25px]', 'rounded-[3px]', 'overflow-hidden', 'outline', 'outline-1', '-outline-offset-1', 'outline-[#595b5e]', 'bg-[#3f4144]');
      el.innerHTML = el.dataset.tools.split(' ').map(t => {
        if (t[0] === "'") return `<button class="w-[25px] text-[15px] font-bold font-['Liberation_Sans',sans-serif]">${t[1]}</button>`;
        const name = t.replace(/[*-]$/, '');
        const state = t.endsWith('*') ? 'bg-[#d6d7d8] text-[#26282a]' : t.endsWith('-') ? 'text-[#808285]' : '';
        return `<button aria-label="${name}" class="w-[25px] grid place-items-center ${state}"><svg class="size-[17px]"><use href="#${name}"/></svg></button>`;
      }).join('');
    });

    // [label, slot width]
    const menu = [['ファイル', 56], ['編集', 45], ['プロジェクト', 75], ['Audio', 54], ['MIDI', 47], ['スコア', 48], ['メディア', 55], ['トランスポート', 82], ['スタジオ', 59], ['ウィンドウ', 64], ['VST Cloud', 75], ['Hub', 45], ['マニュアル', 60]];
    $('menu').innerHTML = menu.map(([t, w]) => `<button class="text-left whitespace-nowrap shrink-0 ${/[A-z]/.test(t) ? 'text-[12px]' : 'text-[10px]'}" style="width:${w}px">${t}</button>`).join('');

    const status = [['オーディオ入力', '接続されました', 160], ['オーディオ出力', '接続されました', 160], ['Control Room', '接続されました', 167], ['残り録音時間', '83 時間 28 分', 164], ['録音形式', '48 kHz - 16 bit', 157], ['フレームレート', '30 fps', 125], ['プロジェクトのパン補正', '均等パワー', 176]];
    $('status').innerHTML = status.map(([k, v, w]) => `<div class="h-[19px] flex items-center justify-between px-2 whitespace-nowrap bg-[#303235]" style="width:${w}px"><dt class="${/[A-z]/.test(k) ? '' : 'text-[10px]'}">${k}</dt><dd class="font-semibold ${/\d/.test(v) ? '' : 'text-[10px]'}">${v}</dd></div>`).join('');

    $('dbs').innerHTML = [[0, 24], [6, 55], [12, 86], [18, 117], [24, 147], [30, 174], [40, 210], [50, 235]].map(([n, y]) => `<span class="absolute inset-x-0 -translate-y-1/2" style="top:${y}px">- ${n} -</span>`).join('');

    // track list
    const tracks = ['HALion Sonic 01', 'HALion Sonic 01 (D)', 'Audio 01', 'PK_3_Crash1_v2-03', 'HALion Sonic 02', 'HALion Sonic 02 (D)', 'ABPL2 01', 'HALion Sonic 03'];
    $('tracks').innerHTML += tracks.map((name, i) => {
      const audio = i === 2 || i === 3, sel = i === 7;
      const box = sel ? 'border-[#6c6c6c] text-[#222]' : 'border-[#161718] bg-[#2b2d30] text-[#b4b5b6]';
      return `<div class="flex h-[46px] border-t border-black font-['Liberation_Sans',sans-serif]">
        <div class="w-10 shrink-0 flex items-start justify-between pl-1 pr-1 pt-1 bg-[#77797c] text-[#1d1e20]"><svg class="size-4"><use href="#${audio ? 'wave' : 'keys'}"/></svg>${i + 1}</div>
        <i class="w-1 shrink-0 bg-[#d5d7e6] border-r border-black box-content"></i>
        <div class="flex-1 flex ${sel ? 'bg-[#a0a1a2]' : ''}">
          <div class="ml-px mt-0.5 flex w-[50px] h-5 rounded-xs border font-bold text-[13px] ${box}"><button class="flex-1">M</button><button class="flex-1">S</button></div>
          <div class="ml-[5px]">
            <div class="h-[21px] pl-1 leading-[22px] text-[13px] ${sel ? 'text-[#2c2c2c]' : 'text-[#d8d9da]'}">${name}</div>
            <div class="flex gap-0.5 h-5 *:rounded-xs">
              <div class="flex w-12 border ${box}"><button aria-label="録音可能" class="flex-1 grid place-items-center ${sel ? 'bg-[#dd3a36]' : ''}"><svg class="size-4"><use href="#rec"/></svg></button><button aria-label="モニター" class="flex-1 grid place-items-center"><svg class="size-3"><use href="#spk"/></svg></button></div>
              <div class="flex border ${box}"><button aria-label="編集" class="w-[21px] grid place-items-center"><svg class="size-3.5"><use href="#ee"/></svg></button>${audio ? '' : '<button aria-label="インストゥルメント" class="w-[25px] grid place-items-center"><svg class="size-3.5"><use href="#keys"/></svg></button>'}</div>
            </div>
          </div>
        </div>
      </div>`;
    }).join('');

    // arrangement; one bar = 54.4px, one step = 1/16
    const BAR = 54.4, STEP = BAR / 16;
    const barX = n => 24 + (n - 2) * BAR;
    const lastBar = Math.floor(($('timeline').clientWidth - 44) / BAR) + 2;
    let grid = '<rect width="100%" height="25" fill="#1a1c1f"/>';
    for (let n = 2; n <= lastBar + 1; n++) {
      const x = Math.floor(barX(n)), h = Math.floor(barX(n) + BAR / 2);
      grid += `<path d="M${x}.5 25V412" stroke="#606366"/><path d="M${h}.5 25V412" stroke="#45484b"/><path d="M${x}.5 0V24" stroke="#e8e8e8"/>`;
    }
    for (let i = 0; i < 8; i++) grid += `<path d="M0 ${45 + i * 46}.5H4000" stroke="#3b3e41"/>`;
    let html = `<svg class="absolute inset-0 w-full h-full">${grid}</svg>`;
    for (let n = 2; n <= lastBar; n++) html += `<span class="absolute top-[9px] text-[12px] font-semibold text-[#e4e4e4]" style="left:${Math.floor(barX(n)) + 5}px">${n}</span>`;

    // notes as [from step, to step, y, height]
    const melody = [[0,2,1],[4,6,1],[8,12,1],[14,16,0],[18,22,1],[22,24,2],[24,26,1],[26,27,0],[27,28,1],[28,32,2],[32,34,1],[36,38,1],[40,44,1],[46,48,0],[50,54,1],[54,55.5,3],[55.5,57.5,4],[57.5,59,3],[59,60,2],[60,66,1],[68,70,1],[72,76,1],[78,80,0],[82,86,1],[86,88,2],[88,90,1],[90,91,0],[91,92,1],[92,96,2],[96,98,1],[100,102,1],[104,108,1],[110,112,0],[112,114.6,1],[114.6,117.3,2],[117.3,120,3],[120,122.6,2],[122.6,125.3,3],[125.3,128,2],[128,144,1]].map(([a, b, r]) => [a, b, [17, 20, 22, 25, 28][r], 3]);
    const bassA = [[0,4,20],[8,11,20],[12,14,20],[16,20,28],[20,24,10],[24,27,28],[27,27.7,10],[28,32,28],[32,36,25],[36,40,7],[40,43,25],[43,44,7],[44,48,25]];
    const bass1 = [...bassA, [48,52,20],[52,55,2],[55,56,20]];
    const bass2 = [...bassA, [48,50.7,20],[50.7,53.3,2],[53.3,56,20],[56,58.7,2],[58.7,61.3,20],[61.3,64,2]];
    const intro = [[16,32,20,2],[16,32,22,5],[32,48,23,6],[48,64,26,6],[64,80,22,6],[80,96,20,2],[80,96,22,5],[96,112,24,6],[112,128,23,6],[128,143.5,22,6]];
    const ch1 = [[18,20,18],[22,27.6,18],[27.4,27.8,6,4],[32,48,9],[32,48,13,5],[48,60,13],[50,52,18,6],[50,52,25],[54,60,18,6],[54,60,25]];
    const ch2 = [[0,16,20],[18,20,18],[18,20,22],[18,20,28],[22,28,18],[22,28,22],[22,28,28],[32,64,14],[32,64,20],[32,48,25],[48,64,28],[48,64,32]];
    const drums = [0,4,8,11,12,14,16,20,24,27,28,32,36,40,43,44,48,52,55,64,68,72,75,76,78,80,84,88,91,92,96,100,104,107,108,112,114.6,117.3,120,122.6,125.3,128];
    const line = 'M80 10l6-2 9-1 9 1h10l9 2h11l4-1 5 1 7-1h11l10 1 9 1 7 1 15 1 3-1h29l5-2 11 2 7 1 4-1h28l6-1 9 1 10 2 7-1 11-2h39l8-2 5-1 3 1 17 1 5 1h12l2-2h9l11 1 14 1 7-1h12';
    const clips = [
      [0, 1, 10, 'HALion Sonic 01', intro], [0, 10, 14, 'HALion Sonic 01', ch1], [0, 14, 18, 'HALion Sonic 01', ch2], [0, 18, 19, 'HALion Sonic 01', [[0,16,20]]], [0, 20, 24, 'HALion Sonic 01', [[0,3.3,28],[3.3,7.5,16,2],[3.3,7.5,19,2],[7.5,11,28],[11,15,16,2],[11,15,19,2]]],
      [1, 10, 19, 'HALion Sonic 01 (D)', melody], [4, 10, 19, 'HALion Sonic 02', melody], [5, 10, 19, 'HALion Sonic 02 (D)', melody],
      [6, 10, 14, 'ABPL2 01', bass1], [6, 14, 18, 'ABPL2 01', bass2], [6, 18, 19, 'ABPL2 01', []], [6, 20, 24, 'ABPL2 01', [[0,64,20]]],
      [7, 10, 19, 'HALion Sonic 03', []]
    ];
    clips.forEach(([row, a, b, name, notes], i) => {
      const x = Math.floor(barX(a)) + 1, w = Math.floor(barX(b)) - x;
      let art = notes.map(([s, e, y, h]) => `<rect x="${s * STEP}" y="${y}" width="${(e - s) * STEP}" height="${h || 3}"/>`).join('');
      if (i === 0) art += `<path transform="translate(14)" d="${line}" fill="none" stroke="#4c4d4f" stroke-width="1.500"/>`;
      if (row === 7) art = [...drums.map(s => [s, 29]), [56, 2]].map(([s, y]) => `<path d="M${s * STEP - 1} ${y - 3}l2.500 3-2.500 3-2.500-3z"/>`).join('');
      html += `<div class="absolute h-[41px] overflow-hidden border border-[#dcdcdd] bg-[#79797b]" style="left:${x}px;width:${w}px;top:${47 + row * 46}px">
        <svg class="absolute inset-0 w-full h-full" fill="#505153">${art}</svg>
        <span class="absolute left-0 top-0 h-[17px] leading-4 px-[3px] whitespace-nowrap bg-[#8a8a8c] font-['Liberation_Sans',sans-serif] text-[11px] font-bold text-black">${name}</span>
      </div>`;
    });
    html += '<i class="absolute top-0 bottom-0 left-[407px] w-px bg-white"></i>';
    $('timeline').innerHTML = html;

    // score drawing
    const F = 'font-family="Liberation Serif, serif"';
    const Y = { C: -15, B: -11, A: -7.5, G: -3.5, F: 0 };
    function system(x0, x1, top, bars) {
      let s = '';
      for (let i = 0; i < 5; i++) s += `<path d="M${x0} ${top + i * 7.5}H${x1}" stroke="#333"/>`;
      bars.forEach(b => s += `<path d="M${b} ${top}v30" stroke="#000" stroke-width="1.500"/>`);
      return s;
    }
    function head(x, p, top) {
      const y = top + Y[p];
      let s = `<ellipse cx="${x}" cy="${y}" rx="5.200" ry="3.800" transform="rotate(-22 ${x} ${y})"/>`;
      if (p === 'A' || p === 'B' || p === 'C') s += `<path d="M${x - 8} ${top - 7.5}h16" stroke="#000"/>`;
      if (p === 'C') s += `<path d="M${x - 8} ${top - 15}h16" stroke="#000"/>`;
      return s;
    }
    const stem = (x, p, top, len = 26) => `<path d="M${x - 4.5} ${top + Y[p]}V${top + Y[p] + len}" stroke="#000" stroke-width="1.200"/>`;
    const quarter = (x, p, top) => head(x, p, top) + stem(x, p, top);
    const flagged = (x, p, top) => head(x, p, top) + `<path d="M${x - 4.5} ${top + Y[p]}V${top + 15}" stroke="#000" stroke-width="1.200"/><path d="M${x - 4.5} ${top + 15}c1-8 11-11 7.500-24 1.500 12-5 13-7.500 16z" stroke="#000" stroke-width=".8"/>`;
    const rest = (x, top) => `<circle cx="${x - 2}" cy="${top + 12}" r="2"/><path d="M${x - 3} ${top + 13}q4 1 6-3l-3 12" fill="none" stroke="#000" stroke-width="1.400"/>`;
    // beamed run of [x, pitch]; dip tilts the beam, sub = index where the 16th beam starts
    function beam(ns, top, dip = 0, sub = -1) {
      const a = ns[0][0] - 5, b = ns[ns.length - 1][0] - 4, y = top + 12;
      let s = ns.map(([x, p]) => head(x, p, top) + `<path d="M${x - 4.5} ${top + Y[p]}V${y + 3}" stroke="#000" stroke-width="1.200"/>`).join('');
      s += `<path d="M${a} ${y}L${b} ${y + dip}v3.500L${a} ${y + 3.500}z"/>`;
      if (sub >= 0) s += `<path d="M${ns[sub][0] - 5} ${y - 6}H${b}v3.500H${ns[sub][0] - 5}z"/>`;
      return s;
    }
    const num = (x, n, top) => `<text x="${x}" y="${top - 6}" font-size="12" fill="#8d9ba0" font-family="Noto Sans, sans-serif">${n}</text>`;
    const flat = (x, y) => `<path d="M${x} ${y - 15}v19c5-2.500 7-6 5.500-8-1.500-1.500-4-.5-5.500 1.500" fill="none" stroke="#000" stroke-width="1.600"/>`;
    const clef = (x, top) => `<g transform="translate(${x} ${top - 11})" fill="none" stroke="#000" stroke-linecap="round">
      <path stroke-width="1.700" d="M11 37.500C7 35.500 7.500 28.500 12.500 28.500 18 28.500 20.500 32.500 19 37 17.500 42 8 43 3.500 38-.5 32 3 25 9 19c5-5 7-9.500 6-14.500C14.300 1 12.500 1 11 4.500 9.500 8 10 12 11 18l4 26c1 6-4 9-7.500 7"/>
      <path stroke-width="3.200" d="M3.500 36C1.500 31 4 25.500 10 19.500M14 29c4 .5 5.500 4 4.300 7.500"/><path stroke-width="2.600" d="M9.500 19c4-4 6.500-8 6-13"/><circle cx="7.500" cy="49" r="2.500" fill="#000"/></g>`;

    const T = 104, T2 = 238;
    let s = system(133, 1530.5, T, [650, 1085.5, 1530.5]);
    s += `<text x="32" y="124" font-size="17" ${F}>Treble staff</text><text x="134" y="90" font-size="16" font-style="italic" ${F}>10</text>`;
    s += `<path d="M194 67v16" stroke="#000" stroke-width="1.300"/><ellipse cx="190.500" cy="83" rx="4" ry="3" transform="rotate(-22 190.500 83)"/><text x="197" y="83" font-size="15" ${F}>= 242</text>`;
    s += clef(137, T) + flat(166, T + 15) + flat(174, T + 4);
    s += `<g font-size="24" font-weight="700" text-anchor="middle" stroke="#000" stroke-width=".6" ${F}><text x="193" y="119">4</text><text x="193" y="134">4</text></g>`;
    s += num(213, 10, T) + flagged(222, 'B', T) + rest(275, T) + flagged(330, 'B', T) + rest(383, T) + beam([[438, 'B'], [492, 'B']], T) + rest(545, T) + flagged(600, 'C', T);
    s += num(655, 11, T) + rest(666, T) + beam([[721, 'B'], [775, 'B'], [829, 'A']], T, 3) + beam([[883, 'B'], [937, 'C'], [975, 'B']], T, 0, 1) + quarter(1013, 'A', T);
    s += num(1091, 12, T) + flagged(1102, 'B', T) + rest(1155, T) + flagged(1211, 'B', T) + rest(1263, T) + beam([[1319, 'B'], [1372, 'B']], T) + rest(1425, T) + flagged(1481, 'C', T);

    s += system(72, 1087, T2, [303.5, 484.5, 668, 849, 1007, 1079]) + `<path d="M1085.500 ${T2}v30" stroke="#000" stroke-width="4"/>`;
    s += `<text x="30" y="258" font-size="17" ${F}>Tr</text><text x="72" y="224" font-size="16" font-style="italic" ${F}>13</text>` + clef(76, T2) + flat(103, T2 + 15) + flat(111, T2 + 4);
    s += num(130, 13, T2) + rest(139, T2) + beam([[161, 'B'], [182, 'B'], [203, 'G'], [224, 'F']], T2, 3) + beam([[245, 'G'], [260, 'A']], T2) + quarter(278, 'B', T2);
    s += num(309, 14, T2) + flagged(320, 'B', T2) + rest(340, T2) + flagged(362, 'B', T2) + rest(382, T2) + beam([[404, 'B'], [426, 'B']], T2) + rest(445, T2) + flagged(467, 'C', T2);
    s += num(490, 15, T2) + rest(500, T2) + beam([[523, 'B'], [544, 'B'], [565, 'A']], T2, 1) + beam([[585, 'B'], [606, 'C'], [624, 'B']], T2, 0, 1) + quarter(642, 'A', T2);
    s += num(673, 16, T2) + flagged(684, 'B', T2) + rest(704, T2) + flagged(726, 'B', T2) + rest(746, T2) + beam([[768, 'B'], [790, 'B']], T2) + rest(810, T2) + flagged(831, 'C', T2);
    s += num(854, 17, T2) + [[865, 'B'], [889, 'A'], [913, 'G'], [937, 'A'], [962, 'G'], [986, 'A']].map(([x, p]) => quarter(x, p, T2)).join('');
    s += num(1013, 18, T2) + `<ellipse cx="1026" cy="${T2 - 11}" rx="5.500" ry="3.500" fill="none" stroke="#000" stroke-width="2.400"/><path d="M1016 ${T2 - 7.5}h20" stroke="#000"/>`;
    $('score').innerHTML = s;

    // media rack tiles, drawn on a 70x70 board
    const tiles = [
      ['VST インスト...ント', '<path d="M13 16q0-2 2-2h6q2 0 2 2v21h3v17q0 2-2 2h-9q-2 0-2-2zM32 14h5q2 0 2 2v21h3v17q0 2-2 2h-9q-2 0-2-2V37h2V16q0-2 1-2zM50 14h5q2 0 2 2v38q0 2-2 2h-8q-2 0-2-2V37h3V16q0-2 2-2z"/>'],
      ['VST エフェクト', '<text x="35" y="50" text-anchor="middle" font-size="40" font-weight="800" font-family="Open Sans, sans-serif">FX</text>'],
      ['ループ & サンプル', '<path d="M19 17h18a18 18 0 11-17 21" fill="none" stroke="#26282b" stroke-width="6"/><path d="M11 37l8-12 9 12z"/>'],
      ['プリセット', '<path d="M17 15h15l8 14-8 13H17l-7-13zM43 34h12l5 10-5 11H43l-6-11z"/>'],
      ['ユーザープリセット', '<path d="M19 14h15l8 14-8 14H19l-7-14z"/><g stroke="#a9abad" stroke-width="2"><circle cx="42" cy="33" r="8.500"/><path d="M30 51q0-11 8-10 4 2 8 0 9-1 9 10 0 6-5 6H35q-5 0-5-6z"/></g>'],
      ['ファイルブラウザー', '<rect x="9" y="21" width="52" height="18" rx="3"/><circle cx="46" cy="30" r="2.500" fill="#a9abad"/><circle cx="54" cy="30" r="2.500" fill="#a9abad"/><circle cx="28" cy="41" r="11" fill="#a9abad"/><circle cx="28" cy="41" r="7" fill="#a9abad" stroke="#26282b" stroke-width="3"/><path d="M33 46l9 9" stroke="#26282b" stroke-width="4"/>'],
      ['お気に入り', '<path d="M35 13l6 16 17 1-13 11 5 16-15-9-15 9 5-16L12 30l17-1z" stroke="#26282b" stroke-width="2" stroke-linejoin="round"/>']
    ];
    $('tiles').innerHTML = tiles.map(([t, d]) => `<button class="h-[124px] flex flex-col items-center"><svg class="size-[70px] shrink-0 rounded-[3px] bg-[#a9abad]" viewBox="0 0 70 70" fill="#26282b">${d}</svg><span class="mt-3 whitespace-nowrap text-[11px] text-[#e0e1e2]">${t}</span></button>`).join('');
  </script>
</body>
</html>
